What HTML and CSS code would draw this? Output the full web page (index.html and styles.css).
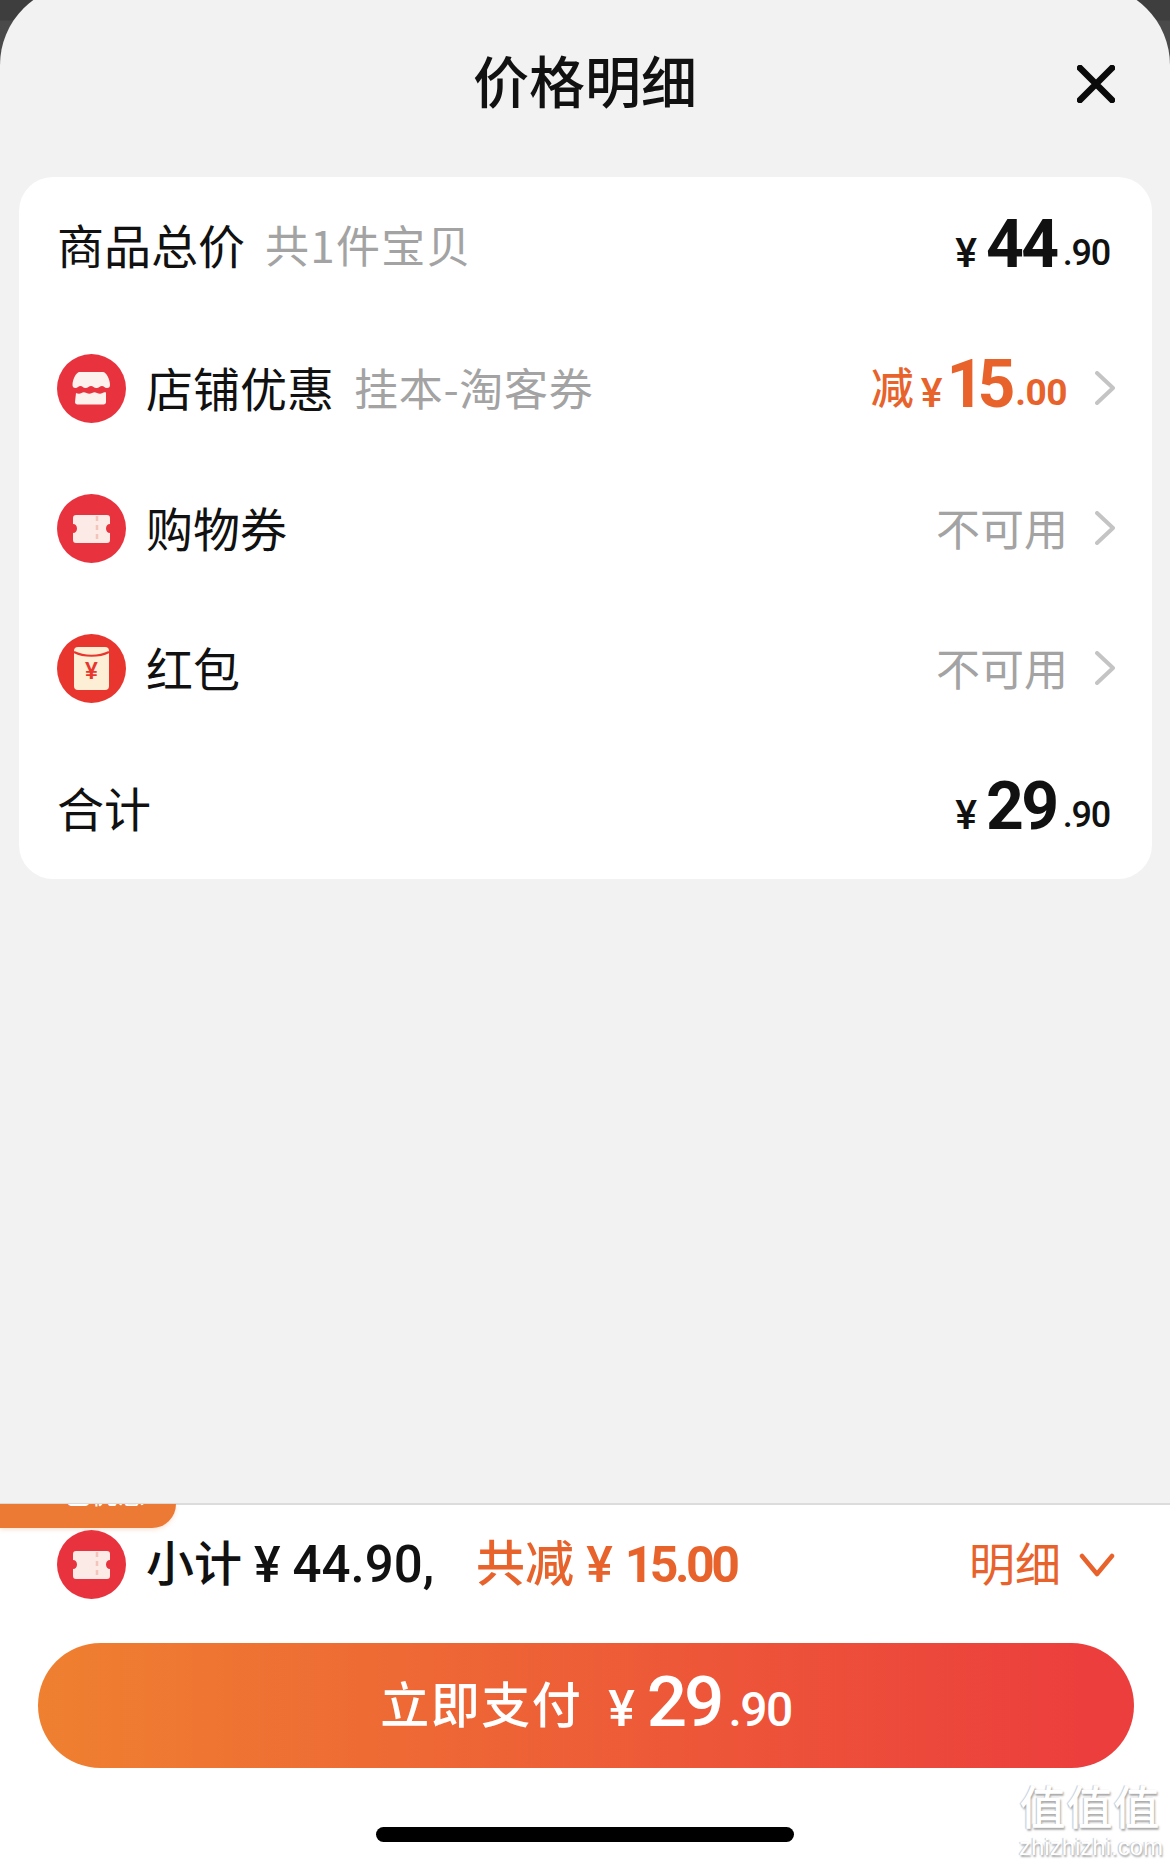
FILE: index.html
```html
<!DOCTYPE html>
<html lang="zh-CN">
<head>
<meta charset="utf-8">
<title>价格明细</title>
<link rel="stylesheet" href="styles.css">
</head>
<body>
<div class="sheet">
  <header class="head">
    <h1 class="title">价格明细</h1>
    <svg class="close" viewBox="0 0 38 38"><path d="M3 3 35 35M35 3 3 35"/></svg>
  </header>
  <section class="card">
    <div class="row row-first">
      <span class="label">商品总价</span><span class="sub first">共1件宝贝</span>
      <span class="price"><i class="yen">¥</i><b class="big">44</b><span class="dec">.90</span></span>
    </div>
    <div class="row">
      <svg class="icon" viewBox="0 0 69 69"><circle cx="34.500" cy="34.500" r="34.500" fill="#e8333f"/><path fill="#fdf1ee" d="M23 18h23c3 0 7 7 7 13 0 2-1 3-3 3-2.500 0-3-2-5-2s-3 2-5.500 2-3.500-2-5.500-2-3 2-5.500 2-3-2-5-2-3 2-5 2c-2 0-3-1-3-3 0-6 4-13 7-13Z"/><path fill="#fdf1ee" d="M19 39c2 1 4 1 5.500 0s3-1 5 0 3.500 1 5.500 0 3-1 5 0 4 1 5.500 0 2-1 3.500-.500V48c0 1.500-1 2.500-2.500 2.500h-26c-1.500 0-2.500-1-2.500-2.500Z"/></svg>
      <span class="label">店铺优惠</span><span class="sub">挂本-淘客券</span>
      <span class="price orange"><span class="jian">减</span><i class="yen">¥</i><b class="big tight">15</b><span class="dec strong">.00</span></span>
      <svg class="chev" viewBox="0 0 20 34"><path d="M2 2 18 17 2 32"/></svg>
    </div>
    <div class="row">
      <svg class="icon" viewBox="0 0 69 69"><circle cx="34.500" cy="34.500" r="34.500" fill="#e8333f"/><path fill="#fbeae6" d="M19 21h31c2 0 3 1 3 3v6c-2.500 0-4 2-4 4.500s1.500 4.500 4 4.500v7c0 2-1 3-3 3H19c-2 0-3-1-3-3v-7c2.500 0 4-2 4-4.500S18.500 30 16 30v-6c0-2 1-3 3-3Z"/><path stroke="#f4c4ba" stroke-width="2.500" stroke-dasharray="5 4" d="M40 22v26"/></svg>
      <span class="label">购物券</span>
      <span class="muted">不可用</span>
      <svg class="chev" viewBox="0 0 20 34"><path d="M2 2 18 17 2 32"/></svg>
    </div>
    <div class="row">
      <svg class="icon" viewBox="0 0 69 69"><circle cx="34.500" cy="34.500" r="34.500" fill="#e8362f"/><rect x="17" y="13" width="35" height="43" rx="4" fill="#fdeed6"/><path fill="none" stroke="#e8362f" stroke-width="2" d="M17 18c10 5 25 5 35 0"/><text x="34.500" y="45" class="hongbao">¥</text></svg>
      <span class="label">红包</span>
      <span class="muted">不可用</span>
      <svg class="chev" viewBox="0 0 20 34"><path d="M2 2 18 17 2 32"/></svg>
    </div>
    <div class="row row-last">
      <span class="label">合计</span>
      <span class="price"><i class="yen">¥</i><b class="big">29</b><span class="dec">.90</span></span>
    </div>
  </section>
  <footer class="foot">
    <div class="tag"><span class="tag-text">已优惠</span></div>
    <div class="summary">
      <svg class="icon" viewBox="0 0 69 69"><circle cx="34.500" cy="34.500" r="34.500" fill="#e8333f"/><path fill="#fbeae6" d="M19 21h31c2 0 3 1 3 3v6c-2.500 0-4 2-4 4.500s1.500 4.500 4 4.500v7c0 2-1 3-3 3H19c-2 0-3-1-3-3v-7c2.500 0 4-2 4-4.500S18.500 30 16 30v-6c0-2 1-3 3-3Z"/><path stroke="#f4c4ba" stroke-width="2.500" stroke-dasharray="5 4" d="M40 22v26"/></svg>
      <span class="sum-label">小计</span>
      <span class="sum-yen">¥</span><span class="sum-num">44.90,</span>
      <span class="sum-label orange cut">共减</span>
      <span class="sum-yen orange">¥</span><span class="sum-num orange narrow">15.00</span>
      <span class="detail">明细</span>
      <svg class="down" viewBox="0 0 36 26"><path d="M3 4 18 22 33 4"/></svg>
    </div>
    <button class="pay"><span class="pay-label">立即支付</span><i class="pay-yen">¥</i><b class="pay-big">29</b><span class="pay-dec">.90</span></button>
    <div class="home"></div>
  </footer>
  <div class="mark"><div class="mark-cn">值值值</div><div class="mark-en">zhizhizhi.com</div></div>
</div>
</body>
</html>
```

FILE: styles.css
```css
* { box-sizing: border-box; }
html, body { margin: 0; padding: 0; }
body {
  width: 1170px;
  height: 1867px;
  background: linear-gradient(#3e3e3e 20px, #4a4a4a 21px);
  overflow: hidden;
  font-family: "Noto Sans CJK SC", "Liberation Sans", sans-serif;
}
.sheet {
  position: relative;
  height: 1882px;
  margin-top: -15px;
  background: #f2f2f2;
  border-radius: 80px 80px 0 0;
  display: flex;
  flex-direction: column;
  overflow: hidden;
}
.head {
  height: 192px;
  flex: none;
  position: relative;
  display: flex;
  justify-content: center;
  padding-top: 57px;
}
.title {
  margin: 0;
  font-size: 56px;
  line-height: 74px;
  font-weight: 500;
  color: #111;
}
.close {
  position: absolute;
  left: 1077px;
  top: 80px;
  width: 38px;
  height: 38px;
  fill: none;
  stroke: #0a0a0a;
  stroke-width: 6.500px;
  stroke-linecap: round;
}
.card {
  margin: 0 18px 0 19px;
  height: 702px;
  background: #fff;
  border-radius: 34px;
  flex: none;
}
.row {
  height: 140px;
  display: flex;
  align-items: center;
  padding: 2px 37px 0 38px;
}
.icon { width: 69px; height: 69px; flex: none; margin-right: 20px; }
.label { font-size: 47px; color: #111; line-height: 60px; padding-bottom: 3px; }
.sub { font-size: 44px; color: #a3a3a3; margin-left: 20px; line-height: 60px; letter-spacing: .7px; padding-bottom: 3px; }
.sub.first { letter-spacing: 1.300px; }
.row-first .label, .row-first .sub { padding-bottom: 8px; }
.row-last .price { padding-top: 8px; }
.muted { margin-left: auto; font-size: 44px; color: #a3a3a3; line-height: 60px; padding-bottom: 2px; margin-right: 1px; }
.muted + .chev { margin-left: 26px; }
.price {
  margin-left: auto;
  margin-right: 5px;
  display: flex;
  align-items: baseline;
  color: #111;
  font-family: Roboto, "Liberation Sans", sans-serif;
  line-height: 60px;
  padding-top: 4px;
}
.price.orange { margin-right: 0; }
.chev { width: 20px; height: 34px; flex: none; margin-left: 28px; fill: none; stroke: #c4c4c4; stroke-width: 4px; stroke-linecap: round; stroke-linejoin: round; }
.orange { color: #e8622c; }
.jian { font-family: "Noto Sans CJK SC", sans-serif; font-size: 43px; font-weight: 500; margin-right: 7px; transform: translateY(-3px); }
.yen { font-style: normal; font-weight: 500; font-size: 41px; margin-right: 9px; }
.big { font-size: 66px; font-weight: 700; letter-spacing: -2.500px; }
.big.tight { letter-spacing: -7px; margin-left: -5px; }
.dec { font-size: 36px; font-weight: 500; letter-spacing: -1.200px; margin-left: 6px; transform: translateY(-2px); }
.dec.strong { font-weight: 700; font-size: 37px; letter-spacing: -.500px; margin-left: 7px; }
.hongbao { font-family: "Liberation Sans", sans-serif; font-size: 23px; font-weight: 700; text-anchor: middle; fill: #e8362f; }
.foot {
  flex: 1;
  position: relative;
  background: #fff;
  border-top: 2px solid #dcdcdc;
  margin-top: 624px;
  display: flex;
  flex-direction: column;
  padding: 25px 38px 0;
}
.tag {
  position: absolute;
  left: 0;
  top: -1px;
  width: 176px;
  height: 24px;
  padding-left: 64px;
  background: #ec7a35;
  border-radius: 0 0 30px 0;
  box-shadow: 0 2px 4px rgba(236, 122, 53, .2);
  overflow: hidden;
  color: #fff;
}
.tag-text { display: block; font-size: 27px; line-height: 32px; margin-top: -27px; }
.summary {
  display: flex;
  align-items: center;
  height: 69px;
  padding: 0 19px;
  flex: none;
}
.summary .icon { margin-right: 20px; }
.sum-label { font-size: 48px; font-weight: 500; color: #111; line-height: 60px; padding-bottom: 10px; }
.sum-label.orange { color: #e8622c; font-size: 49px; }
.cut { margin-left: 42px; }
.sum-yen { font-family: Roboto, "Liberation Sans", sans-serif; font-size: 50px; font-weight: 500; color: #111; margin-left: 12px; margin-right: 12px; line-height: 60px; }
.sum-yen.orange { color: #e8622c; }
.sum-num { font-family: Roboto, "Liberation Sans", sans-serif; font-size: 51px; font-weight: 500; color: #111; letter-spacing: 0; line-height: 60px; }
.sum-num.orange { color: #e8622c; }
.narrow { letter-spacing: -3.500px; font-weight: 700; font-size: 50px; }
.detail { margin-left: auto; margin-right: 18px; font-size: 46px; color: #e8622c; line-height: 60px; padding-bottom: 8px; }
.down { width: 36px; height: 26px; flex: none; fill: none; stroke: #e8622c; stroke-width: 4.500px; stroke-linecap: round; stroke-linejoin: round; margin-right: -2px; }
.pay {
  margin: 44px 0 0 0;
  height: 125px;
  width: 1096px;
  flex: none;
  border: 0;
  border-radius: 63px;
  background: linear-gradient(90deg, #ef8030, #ec3f3d 95%);
  color: #fff;
  display: flex;
  align-items: baseline;
  justify-content: center;
  padding: 17px 0 0 0;
  font-family: Roboto, "Liberation Sans", sans-serif;
}
.pay-label { font-family: "Noto Sans CJK SC", sans-serif; font-size: 49px; font-weight: 500; letter-spacing: 1.500px; margin-right: 26px; transform: translateY(-3px); }
.pay-yen { font-style: normal; font-weight: 500; font-size: 50px; margin-right: 12px; }
.pay-big { font-size: 71px; font-weight: 500; letter-spacing: -3px; }
.pay-dec { font-size: 48px; font-weight: 500; letter-spacing: -1.500px; margin-left: 7px; }
.home {
  width: 418px;
  height: 15px;
  border-radius: 8px;
  background: #000;
  margin: 59px auto 0;
  flex: none;
}
.mark {
  position: absolute;
  left: 1018px;
  top: 1794px;
  width: 146px;
  color: #fff;
  text-align: center;
  text-shadow: 1px 2px 2px #a8a8a8, -1px 0 1px #c8c8c8;
}
.mark-cn { font-size: 46px; line-height: 50px; white-space: nowrap; font-weight: 500; letter-spacing: 1px; margin-left: -2px; }
.mark-en { font-family: "Liberation Sans", sans-serif; font-size: 24px; line-height: 24px; margin-top: 6px; white-space: nowrap; }
```
